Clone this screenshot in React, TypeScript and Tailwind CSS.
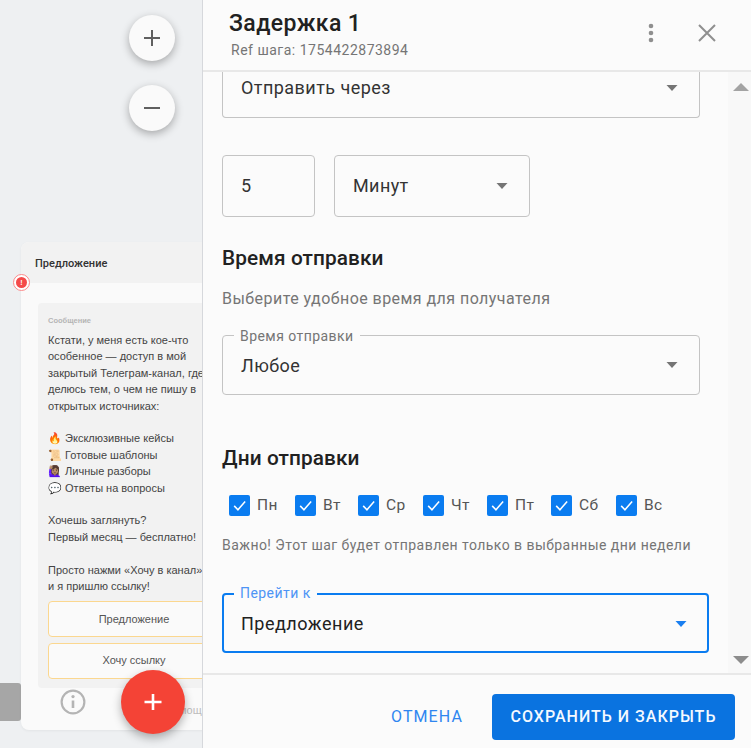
import React from "react";

const roboto = { fontFamily: "Roboto, sans-serif" };

function Caret({ blue = false }: { blue?: boolean }) {
  return (
    <svg width="12" height="6" viewBox="0 0 12 6" className="shrink-0">
      <path d="M0.5 0 L11.5 0 L6 6 Z" fill={blue ? "#1a7ff0" : "#757575"} />
    </svg>
  );
}

function Check() {
  return (
    <span className="flex h-[21px] w-[21px] shrink-0 items-center justify-center rounded-[2px] bg-[#0a7cf0]">
      <svg width="17" height="17" viewBox="0 0 24 24" fill="none">
        <path d="M4.5 12.5 L9.8 18 L20 6.5" stroke="#fff" strokeWidth="2.2" />
      </svg>
    </span>
  );
}

const days: [string, string][] = [
  ["Пн", "w-[66px]"],
  ["Вт", "w-[63px]"],
  ["Ср", "w-[65px]"],
  ["Чт", "w-[64px]"],
  ["Пт", "w-[64px]"],
  ["Сб", "w-[65px]"],
  ["Вс", "w-[50px]"],
];

function Canvas() {
  return (
    <div className="relative h-full w-[202px] shrink-0 overflow-hidden bg-[#eef0f2]" style={{ fontFamily: '"Liberation Sans", sans-serif' }}>
      <button className="absolute left-[129px] top-[15px] flex h-[46px] w-[46px] items-center justify-center rounded-full bg-[#fafafa] shadow-[0_3px_8px_rgba(0,0,0,0.3)]">
        <svg width="24" height="24" viewBox="0 0 24 24"><path d="M12 4v16M4 12h16" stroke="#5f5f5f" strokeWidth="2" /></svg>
      </button>
      <button className="absolute left-[129px] top-[85px] flex h-[46px] w-[46px] items-center justify-center rounded-full bg-[#fafafa] shadow-[0_3px_8px_rgba(0,0,0,0.3)]">
        <svg width="24" height="24" viewBox="0 0 24 24"><path d="M4 12h16" stroke="#5f5f5f" strokeWidth="2" /></svg>
      </button>

      <div className="absolute left-0 top-[683px] h-[38px] w-[21px] rounded-r-[3px] bg-[#a6a6a6]" />

      <div className="absolute left-[21px] top-[242px] flex h-[488px] w-[260px] flex-col overflow-hidden rounded-[8px] bg-[#fafafa] shadow-[0_1px_3px_rgba(0,0,0,0.05)]">
        <div className="flex h-[41px] shrink-0 items-center bg-[#f2f2f2] pl-[14px] pt-[3px] text-[11px] font-medium text-[#333]" style={roboto}>
          Предложение
        </div>
        <div className="ml-[17px] mt-[20px] h-[385px] shrink-0 rounded-[4px] bg-[#f2f2f2] pl-[10px] pr-[6px] pt-[13px]">
          <div className="text-[7.5px] font-bold leading-[10px] text-[#b5b5b5]">Сообщение</div>
          <div className="mt-[6px] whitespace-pre text-[11px] leading-[16.4px] text-[#444]">
            {"Кстати, у меня есть кое-что\nособенное — доступ в мой\nзакрытый Телеграм-канал, где\nделюсь тем, о чем не пишу в\nоткрытых источниках:\n\n🔥 Эксклюзивные кейсы\n📜 Готовые шаблоны\n🙋🏽‍♀️ Личные разборы\n💬 Ответы на вопросы\n\nХочешь заглянуть?\nПервый месяц — бесплатно!\n\nПросто нажми «Хочу в канал»\nи я пришлю ссылку!"}
          </div>
          <div className="mt-[6px] flex h-[36px] w-[172px] items-center justify-center rounded-[4px] border border-[#fbd78f] bg-[#fafafa] pt-[1px] text-[11px] text-[#555]">
            Предложение
          </div>
          <div className="mt-[6px] flex h-[36px] w-[172px] items-center justify-center rounded-[4px] border border-[#fbd78f] bg-[#fafafa] text-[11px] text-[#555]">
            Хочу ссылку
          </div>
        </div>
        <div className="relative flex-1">
          <svg width="26" height="26" viewBox="0 0 24 24" fill="none" className="absolute left-[39px] top-[1px]">
            <circle cx="12" cy="12" r="10.5" stroke="#b4b4b4" strokeWidth="2" />
            <path d="M12 10.5v7" stroke="#b4b4b4" strokeWidth="2.4" />
            <circle cx="12" cy="7" r="1.5" fill="#b4b4b4" />
          </svg>
          <span className="absolute left-[144px] top-[15px] text-[11px] leading-[14px] text-[#bdbdbd]">Помощь</span>
        </div>
      </div>

      <div className="absolute left-[13px] top-[274px] flex h-[17px] w-[17px] items-center justify-center rounded-full border border-[#fb8a8a] bg-white">
        <span className="flex h-[11px] w-[11px] items-center justify-center rounded-full bg-[#f44a4a] text-[7px] font-bold leading-none text-white">!</span>
      </div>

      <button className="absolute left-[121px] top-[670px] flex h-[64px] w-[64px] items-center justify-center rounded-full bg-[#f44336] shadow-[0_4px_10px_rgba(0,0,0,0.3)]">
        <svg width="24" height="24" viewBox="0 0 24 24"><path d="M12 4v16M3.5 12h17" stroke="#fff" strokeWidth="2.6" /></svg>
      </button>
    </div>
  );
}

export default function App() {
  return (
    <div className="relative flex h-[748px] w-[751px] overflow-hidden bg-[#fbfbfb]" style={roboto}>
      <Canvas />
      <div className="flex h-full flex-1 flex-col border-l border-[#d6d8dc] bg-[#fbfbfb]">
        <div className="relative flex h-[72px] shrink-0 items-start justify-between border-b-2 border-[#e8e8e8] pl-[26px] pr-[34px]">
          <div>
            <div className="mt-[10px] text-[23px] font-medium leading-[28px] tracking-[0.4px] text-[#212121]">Задержка 1</div>
            <div className="ml-[2px] mt-[2px] text-[14px] leading-[20px] tracking-[0.5px] text-[#757575]">Ref шага: 1754422873894</div>
          </div>
          <div className="mt-[23px] flex items-center gap-[43px]">
            <svg width="6" height="20" viewBox="0 0 6 20" fill="#8f8f8f">
              <circle cx="3" cy="3" r="2.3" />
              <circle cx="3" cy="10" r="2.3" />
              <circle cx="3" cy="17" r="2.3" />
            </svg>
            <svg width="20" height="20" viewBox="0 0 20 20" fill="none">
              <path d="M2 2 L18 18 M18 2 L2 18" stroke="#8f8f8f" strokeWidth="2" />
            </svg>
          </div>
        </div>

        <div className="relative flex min-h-0 flex-1 overflow-hidden">
          <div className="min-w-0 flex-1 pl-[19px]">
            <div className="-mt-[4px] flex h-[50px] w-[478px] items-center justify-between rounded-b-[4px] border border-t-0 border-[#c4c4c4] pb-[10px] pl-[18px] pr-[21px] text-[18px] tracking-[0.45px] text-[#333]">
              <span>Отправить через</span>
              <Caret />
            </div>

            <div className="mt-[37px] flex gap-[19px]">
              <div className="flex h-[62px] w-[93px] items-center rounded-[4px] border border-[#c4c4c4] pl-[18px] text-[18px] text-[#333]">
                <span className="-mt-[2px]">5</span>
              </div>
              <div className="flex h-[62px] w-[196px] items-center justify-between rounded-[4px] border border-[#c4c4c4] pl-[18px] pr-[21px] text-[18px] tracking-[0.4px] text-[#333]">
                <span className="-mt-[2px]">Минут</span>
                <Caret />
              </div>
            </div>

            <div className="mt-[27px] text-[20.8px] font-medium leading-[28px] tracking-[0.1px] text-[#212121]">Время отправки</div>
            <div className="mt-[16px] text-[16px] leading-[22px] tracking-[0.45px] text-[#757575]">Выберите удобное время для получателя</div>

            <div className="relative mt-[25px] flex h-[60px] w-[478px] items-center justify-between rounded-[4px] border border-[#c4c4c4] pl-[18px] pr-[21px] text-[18px] tracking-[0.4px] text-[#333]">
              <span>Любое</span>
              <Caret />
              <span className="absolute -top-[7px] left-[11px] bg-[#fbfbfb] px-[6px] text-[14px] leading-[15px] tracking-[0.45px] text-[#757575]">Время отправки</span>
            </div>

            <div className="mt-[49px] text-[20.8px] font-medium leading-[28px] tracking-[0.1px] text-[#212121]">Дни отправки</div>

            <div className="ml-[7px] mt-[22px] flex items-center">
              {days.map(([d, w]) => (
                <div key={d} className={`flex items-center gap-[7px] ${w}`}>
                  <Check />
                  <span className="text-[15.5px] leading-[22px] tracking-[0.4px] text-[#555]">{d}</span>
                </div>
              ))}
            </div>

            <div className="mt-[18px] text-[14px] leading-[22px] tracking-[0.45px] text-[#757575]">Важно! Этот шаг будет отправлен только в выбранные дни недели</div>

            <div className="relative mt-[37px] flex h-[60px] w-[487px] items-center justify-between rounded-[4px] border-2 border-[#0a7cf0] pl-[17px] pr-[20px] pt-[1px] text-[18px] tracking-[0.5px] text-[#212121]">
              <span>Предложение</span>
              <Caret blue />
              <span className="absolute -top-[9px] left-[10px] bg-[#fbfbfb] px-[6px] text-[14px] leading-[15px] tracking-[0.45px] text-[#4d94f5]">Перейти к</span>
            </div>
          </div>

          <div className="flex h-full w-[23px] shrink-0 flex-col items-center justify-between bg-[#f8f8f8] pb-[9px] pl-[3px] pt-[11px]">
            <svg width="16" height="8" viewBox="0 0 16 8"><path d="M0 8 L8 0 L16 8 Z" fill="#a3a3a3" /></svg>
            <svg width="16" height="8" viewBox="0 0 16 8"><path d="M0 0 L16 0 L8 8 Z" fill="#8c8c8c" /></svg>
          </div>
        </div>

        <div className="flex h-[75px] shrink-0 items-start justify-end border-t-2 border-[#e8e8e8] pr-[16px] pt-[19px]">
          <span className="mr-[29px] mt-[13px] text-[16px] font-normal leading-[20px] tracking-[1.1px] text-[#2e86f0]">ОТМЕНА</span>
          <button className="h-[46px] w-[243px] rounded-[4px] bg-[#0a73e0] text-[16px] font-medium leading-[20px] tracking-[1px] text-[#f4f9ff]">СОХРАНИТЬ И ЗАКРЫТЬ</button>
        </div>
      </div>
    </div>
  );
}
